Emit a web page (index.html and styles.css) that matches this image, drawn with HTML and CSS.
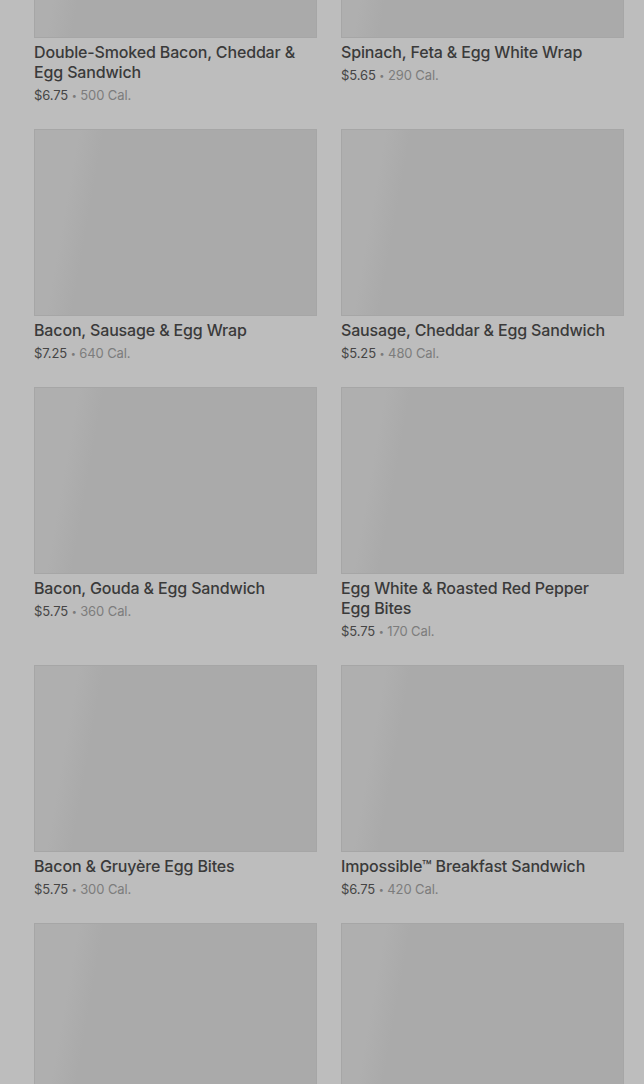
FILE: index.html
```html
<!DOCTYPE html>
<html lang="en">
<head>
<meta charset="utf-8">
<title>Breakfast menu</title>
<link rel="stylesheet" href="styles.css">
</head>
<body>
<main class="grid">
  <article class="card"><div class="thumb"></div><h3 class="name">Double-Smoked Bacon, Cheddar &amp; Egg Sandwich</h3><p class="meta"><span class="price">$6.75</span> <span class="dot">•</span> <span class="cal">500 Cal.</span></p></article>
  <article class="card"><div class="thumb"></div><h3 class="name">Spinach, Feta &amp; Egg White Wrap</h3><p class="meta"><span class="price">$5.65</span> <span class="dot">•</span> <span class="cal">290 Cal.</span></p></article>
  <article class="card"><div class="thumb"></div><h3 class="name">Bacon, Sausage &amp; Egg Wrap</h3><p class="meta"><span class="price">$7.25</span> <span class="dot">•</span> <span class="cal">640 Cal.</span></p></article>
  <article class="card"><div class="thumb"></div><h3 class="name">Sausage, Cheddar &amp; Egg Sandwich</h3><p class="meta"><span class="price">$5.25</span> <span class="dot">•</span> <span class="cal">480 Cal.</span></p></article>
  <article class="card"><div class="thumb"></div><h3 class="name">Bacon, Gouda &amp; Egg Sandwich</h3><p class="meta"><span class="price">$5.75</span> <span class="dot">•</span> <span class="cal">360 Cal.</span></p></article>
  <article class="card"><div class="thumb"></div><h3 class="name">Egg White &amp; Roasted Red Pepper Egg Bites</h3><p class="meta"><span class="price">$5.75</span> <span class="dot">•</span> <span class="cal">170 Cal.</span></p></article>
  <article class="card"><div class="thumb"></div><h3 class="name">Bacon &amp; Gruyère Egg Bites</h3><p class="meta"><span class="price">$5.75</span> <span class="dot">•</span> <span class="cal">300 Cal.</span></p></article>
  <article class="card"><div class="thumb"></div><h3 class="name">Impossible™ Breakfast Sandwich</h3><p class="meta"><span class="price">$6.75</span> <span class="dot">•</span> <span class="cal">420 Cal.</span></p></article>
  <article class="card"><div class="thumb"></div><h3 class="name">&nbsp;</h3><p class="meta">&nbsp;</p></article>
  <article class="card"><div class="thumb"></div><h3 class="name">&nbsp;</h3><p class="meta">&nbsp;</p></article>
</main>
</body>
</html>
```
FILE: styles.css
```css
html, body {
  margin: 0;
  padding: 0;
  background: #bdbdbd;
  overflow: hidden;
}
body {
  font-family: Inter, Roboto, "Liberation Sans", sans-serif;
  color: #383838;
}
.grid {
  display: grid;
  grid-template-columns: 283px 283px;
  column-gap: 24px;
  row-gap: 25px;
  padding-left: 34px;
  margin-top: -149px;
  align-items: start;
}
.card {
  display: flex;
  flex-direction: column;
}
.thumb {
  height: 185px;
  border: 1px solid #a6a6a6;
  background: linear-gradient(100deg, #afafaf 0%, #afafaf 14%, #aaaaaa 22%, #aaaaaa 100%);
}
.name {
  margin: 4px 0 0;
  padding-right: 12px;
  font-size: 16px;
  line-height: 20px;
  font-weight: 500;
  color: #3a3a3a;
  letter-spacing: -0.15px;
}
.meta {
  margin: 4px 0 0;
  height: 18px;
  font-size: 13px;
  line-height: 18px;
  letter-spacing: -0.1px;
}
.price {
  color: #454545;
}
.dot {
  color: #7a7a7a;
  font-size: 9px;
  line-height: 0;
  vertical-align: 1px;
}
.cal {
  color: #7c7c7c;
}
```
